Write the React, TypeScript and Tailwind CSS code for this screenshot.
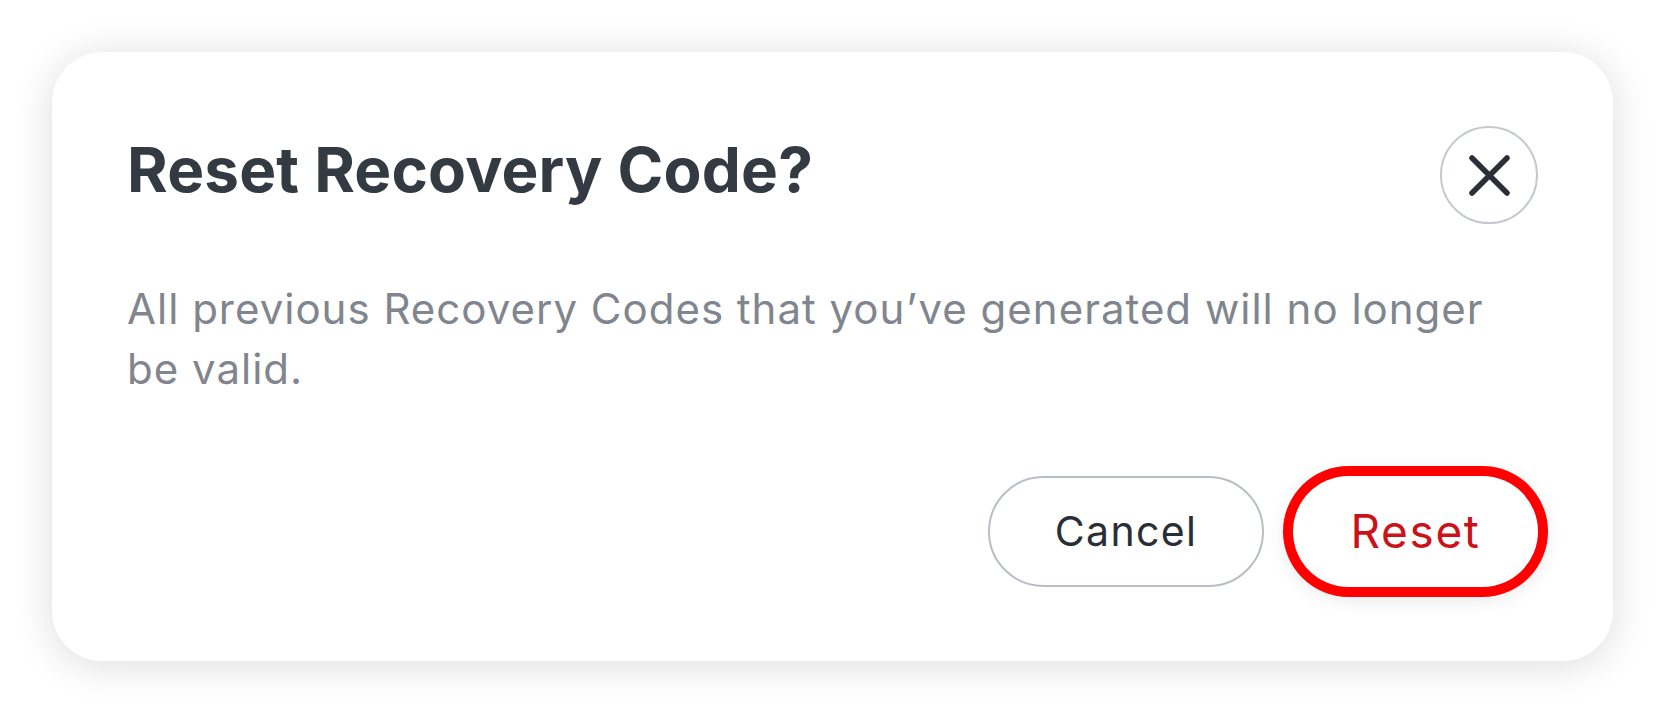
const CloseIcon = () => (
  <svg width="41" height="41" viewBox="0 0 41 41" fill="none">
    <path
      d="M3 3L38 38M38 3L3 38"
      stroke="#2b2f37"
      strokeWidth="5.5"
      strokeLinecap="round"
    />
  </svg>
);

export default function App() {
  return (
    <div className="w-full min-h-screen bg-white p-[52px] font-['Inter','Liberation_Sans',sans-serif]">
      <div className="w-full h-[609px] bg-white rounded-[50px] shadow-[0_4px_40px_rgba(0,0,0,0.14)] px-[75px] pt-[74px] pb-[74px] flex flex-col">
        <div className="flex items-center justify-between">
          <h1 className="mb-[10px] text-[62px] font-bold text-[#343a42] leading-[1.2] tracking-[0.2px]">
            Reset Recovery Code?
          </h1>
          <button className="w-[98px] h-[98px] rounded-full border-2 border-[#c5c9cf] flex items-center justify-center">
            <CloseIcon />
          </button>
        </div>

        <p className="mt-[55px] max-w-[1390px] text-[42px] leading-[60px] tracking-[1px] text-[#80858e]">
          All previous Recovery Codes that you’ve generated will no longer be valid.
        </p>

        <div className="mt-auto flex justify-end items-center gap-[29px]">
          <button className="w-[276px] h-[111px] rounded-full border-2 border-[#b9bdc5] bg-white text-[41px] tracking-[1.3px] text-[#2a2e36]">
            Cancel
          </button>
          <button className="w-[245px] h-[111px] rounded-full bg-white text-[46px] tracking-[1.6px] text-[#cc1219] ring-[10px] ring-[#ff0000] shadow-[0_4px_26px_rgba(0,0,0,0.2)]">
            Reset
          </button>
        </div>
      </div>
    </div>
  );
}
